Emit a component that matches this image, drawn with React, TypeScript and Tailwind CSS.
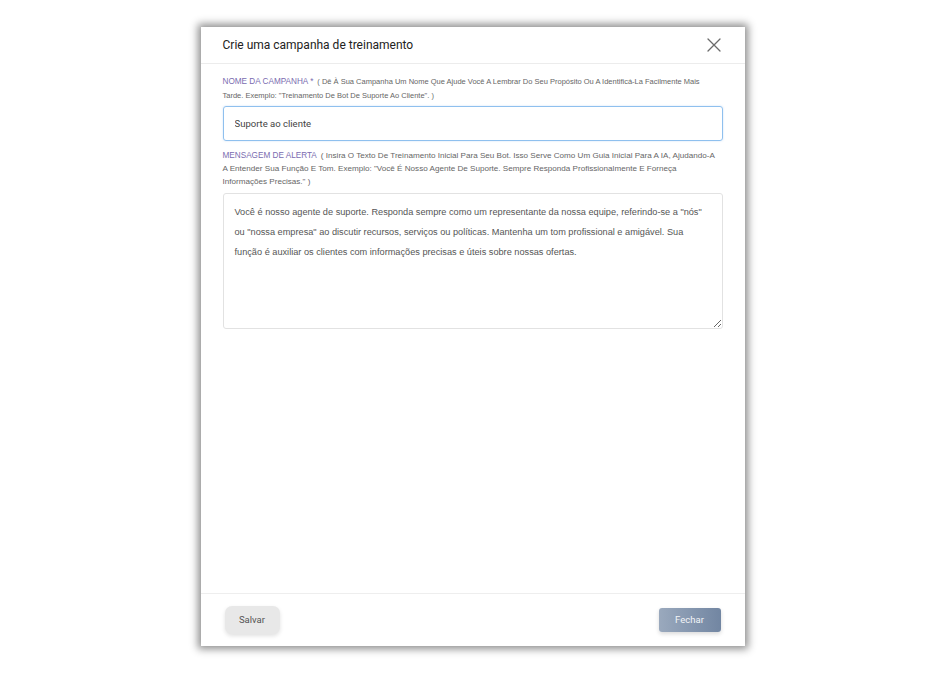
import React, { useState } from "react";

const font = { fontFamily: "Roboto, 'Liberation Sans', Arial, sans-serif" };
const arial = { fontFamily: "'Liberation Sans', Arial, sans-serif" };

const CloseIcon = () => (
  <svg width="14" height="14" viewBox="0 0 14 14" fill="none">
    <path d="M1 1L13 13M13 1L1 13" stroke="#6b6b6b" strokeWidth="1.3" strokeLinecap="round" />
  </svg>
);

const App = () => {
  const [nome, setNome] = useState("Suporte ao cliente");
  const [mensagem, setMensagem] = useState(
    'Você é nosso agente de suporte. Responda sempre como um representante da nossa equipe, referindo-se a "nós" ou "nossa empresa" ao discutir recursos, serviços ou políticas. Mantenha um tom profissional e amigável. Sua função é auxiliar os clientes com informações precisas e úteis sobre nossas ofertas.'
  );

  return (
    <div className="w-full h-[673px] bg-white flex justify-center pt-[27px]" style={font}>
      <div className="w-[544px] h-[619px] bg-white flex flex-col shadow-[0_0_8px_3px_rgba(0,0,0,0.45)]">
        {/* header */}
        <div className="h-[37px] flex items-center justify-between pl-[22px] pr-[24px] border-b border-[#ececec]">
          <h2 className="text-[12px] text-[#222] font-normal">Crie uma campanha de treinamento</h2>
          <button className="p-0">
            <CloseIcon />
          </button>
        </div>

        {/* body */}
        <div className="flex-1 px-[22px] pt-[11px]">
          <div className="text-[7.5px] leading-[14px] text-[#666]" style={arial}>
            <span className="text-[8.2px] text-[#7a6cb0] uppercase mr-[4px]">Nome da campanha *</span>
            ( Dê À Sua Campanha Um Nome Que Ajude Você A Lembrar Do Seu Propósito Ou A Identificá-La Facilmente Mais
            <br />
            Tarde. Exemplo: "Treinamento De Bot De Suporte Ao Cliente". )
          </div>
          <input
            value={nome}
            onChange={(e) => setNome(e.target.value)}
            className="mt-[3px] w-full h-[35px] px-[11px] text-[9.5px] text-[#444] border border-[#8fc0ee] rounded-[3px] outline-none shadow-[0_0_2px_rgba(100,160,230,0.35)]"
          />

          <div className="mt-[8px] text-[8.1px] leading-[13px] text-[#666]" style={arial}>
            <span className="text-[8.2px] text-[#7a6cb0] uppercase mr-[4px]">Mensagem de alerta</span>
            ( Insira O Texto De Treinamento Inicial Para Seu Bot. Isso Serve Como Um Guia Inicial Para A IA, Ajudando-A
            <br />
            A Entender Sua Função E Tom. Exemplo: "Você É Nosso Agente De Suporte. Sempre Responda Profissionalmente E Forneça
            <br />
            Informações Precisas." )
          </div>
          <textarea
            value={mensagem}
            onChange={(e) => setMensagem(e.target.value)}
            style={arial}
            className="mt-[5px] w-full h-[136px] px-[11px] py-[8px] text-[9.2px] leading-[20px] text-[#555] border border-[#e2e2e2] rounded-[3px] outline-none resize-y"
          />
        </div>

        {/* footer */}
        <div className="h-[53px] border-t border-[#eeeeee] flex items-center justify-between px-[24px]">
          <button className="w-[55px] h-[28px] rounded-[7px] bg-[#e8e8e8] text-[9.5px] text-[#555] shadow-[0_2px_4px_rgba(0,0,0,0.12)]">
            Salvar
          </button>
          <button className="w-[62px] h-[24px] rounded-[3px] bg-gradient-to-r from-[#9aa9bd] to-[#7286a2] text-[9.5px] text-[#f2f4f7] shadow-[0_2px_4px_rgba(0,0,0,0.15)]">
            Fechar
          </button>
        </div>
      </div>
    </div>
  );
};

export default App;
